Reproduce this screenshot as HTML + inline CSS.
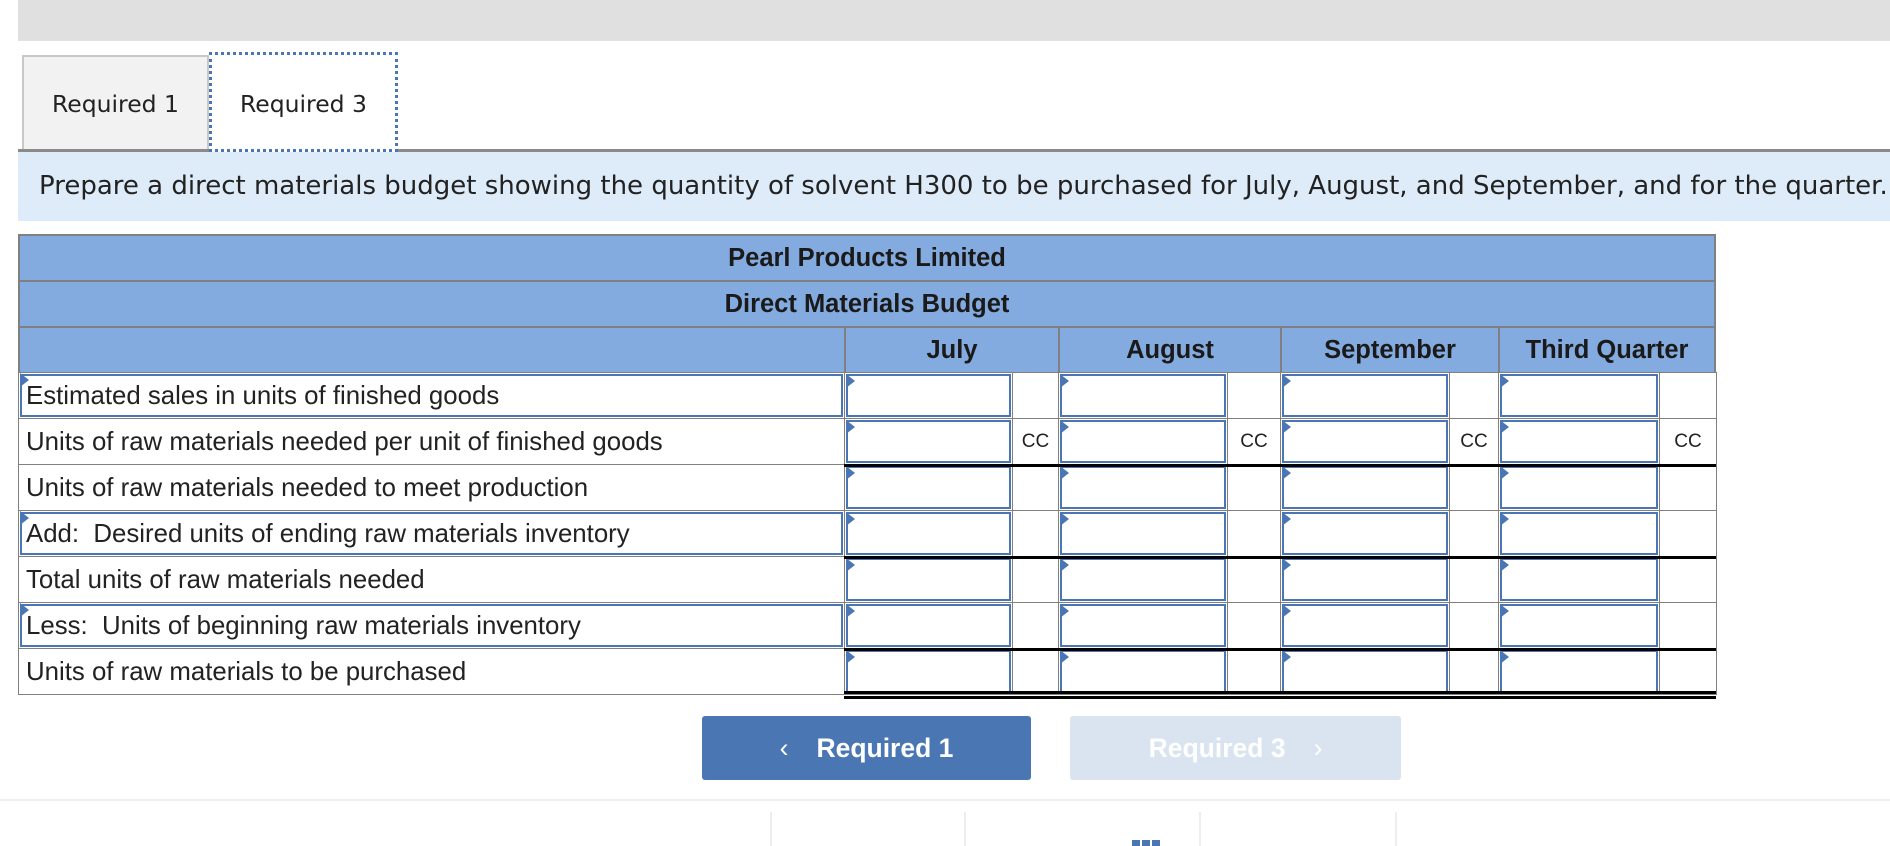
<!DOCTYPE html>
<html><head><meta charset="utf-8"><style>
*{margin:0;padding:0;box-sizing:border-box}
body{width:1890px;height:846px;background:#fff;position:relative;overflow:hidden;font-family:"Liberation Sans",Arial,sans-serif;color:#222}
.a{position:absolute}
.tab{position:absolute;top:55px;height:96px;font-family:"DejaVu Sans",Verdana,sans-serif;font-size:23.5px;display:flex;align-items:center;justify-content:center;color:#222}
.hdr{position:absolute;background:#84abdf;border:2px solid #808080;font-weight:bold;font-size:25.5px;display:flex;align-items:center;justify-content:center;color:#1a1a1a}
.cell{position:absolute;border:1px solid #808080;background:#fff}
.inp{position:absolute;border:2px solid #4a76b5;background:#fff}
.tri{position:absolute;width:0;height:0;border-top:7px solid transparent;border-bottom:7px solid transparent;border-left:9px solid #4a76b5}
.lbl{font-size:25.8px;padding-left:6px;display:flex;align-items:center;color:#222;white-space:nowrap}
.cc{font-size:19px;display:flex;align-items:center;justify-content:center;color:#222}
.blk{position:absolute;height:3px;background:#000}
</style></head><body>
<div class="a" style="left:18px;top:0;width:1872px;height:41px;background:#e0e0e0"></div>
<div class="tab" style="left:22px;width:187px;background:#f2f2f2;border:2px solid #c8c8c8;border-bottom:none">Required 1</div>
<div class="tab" style="left:209px;width:189px;top:52px;height:100px;padding-top:4px;background:#fff;border:3px dotted #4a76b5">Required 3</div>
<div class="a" style="left:18px;top:149px;width:191px;height:3px;background:#8a8a8a"></div>
<div class="a" style="left:398px;top:149px;width:1492px;height:3px;background:#8a8a8a"></div>
<div class="a" style="left:18px;top:152px;width:1872px;height:69px;background:#deebf8"></div>
<div class="a" style="left:39px;top:171px;font-family:'DejaVu Sans',Verdana,sans-serif;font-size:26px;white-space:nowrap;color:#222">Prepare a direct materials budget showing the quantity of solvent H300 to be purchased for July, August, and September, and for the quarter.</div>

<div class="hdr" style="left:18px;top:234px;width:1698px;height:48px">Pearl Products Limited</div>
<div class="hdr" style="left:18px;top:280px;width:1698px;height:48px">Direct Materials Budget</div>
<div class="hdr" style="left:18px;top:326px;width:828px;height:48px"></div>
<div class="hdr" style="left:844px;top:326px;width:216px;height:48px">July</div>
<div class="hdr" style="left:1058px;top:326px;width:224px;height:48px">August</div>
<div class="hdr" style="left:1280px;top:326px;width:220px;height:48px">September</div>
<div class="hdr" style="left:1498px;top:326px;width:218px;height:48px">Third Quarter</div>

<div id="rows"></div>
<script>
var labels=["Estimated sales in units of finished goods","Units of raw materials needed per unit of finished goods","Units of raw materials needed to meet production","Add:&nbsp; Desired units of ending raw materials inventory","Total units of raw materials needed","Less:&nbsp; Units of beginning raw materials inventory","Units of raw materials to be purchased"];
var inLbl=[1,0,0,1,0,1,0];
var xs=[18,844,1012,1058,1227,1280,1449,1498,1659,1716];
var h="";
for(var i=0;i<7;i++){
 var t=372+i*46;
 for(var c=0;c<9;c++){
  var l=xs[c],w=xs[c+1]-xs[c]+1;
  h+='<div class="cell" style="left:'+l+'px;top:'+t+'px;width:'+w+'px;height:47px"></div>';
  if(c==0){
   if(inLbl[i]){h+='<div class="inp lbl" style="left:'+(l+2)+'px;top:'+(t+2)+'px;width:'+(w-4)+'px;height:43px;padding-left:4px;padding-top:2px">'+labels[i]+'</div><div class="tri" style="left:'+(l+2)+'px;top:'+(t+1)+'px"></div>';}
   else h+='<div class="a lbl" style="left:'+(l+2)+'px;top:'+(t+2)+'px;width:'+(w-4)+'px;height:43px;padding-top:2px">'+labels[i]+'</div>';
  } else if(c%2==1){
   h+='<div class="inp" style="left:'+(l+2)+'px;top:'+(t+2)+'px;width:'+(w-4)+'px;height:43px"></div><div class="tri" style="left:'+(l+2)+'px;top:'+(t+2)+'px"></div>';
  } else if(i==1){
   h+='<div class="a cc" style="left:'+l+'px;top:'+t+'px;width:'+w+'px;height:47px">CC</div>';
  }
 }
}
[464,556,648,691].forEach(function(y){h+='<div class="blk" style="left:844px;top:'+y+'px;width:872px"></div>';});
h+='<div class="blk" style="left:844px;top:696px;width:872px"></div>';
document.getElementById("rows").innerHTML=h;
</script>

<div class="a" style="left:702px;top:716px;width:329px;height:64px;background:#4a76b3;border-radius:3px;color:#fff;font-weight:bold;font-size:26.5px;display:flex;align-items:center;justify-content:center"><span style="font-weight:normal;margin-right:28px">&#x2039;</span>Required 1</div>
<div class="a" style="left:1070px;top:716px;width:331px;height:64px;background:#dae4f0;border-radius:3px;color:#fff;font-weight:bold;font-size:26.5px;display:flex;align-items:center;justify-content:center">Required 3<span style="font-weight:normal;margin-left:28px">&#x203A;</span></div>
<div class="a" style="left:0;top:799px;width:1890px;height:2px;background:#f0f0f0"></div>
<div class="a" style="left:770px;top:812px;width:2px;height:34px;background:#eee"></div>
<div class="a" style="left:964px;top:812px;width:2px;height:34px;background:#eee"></div>
<div class="a" style="left:1199px;top:812px;width:2px;height:34px;background:#eee"></div>
<div class="a" style="left:1395px;top:812px;width:2px;height:34px;background:#eee"></div>
<div class="a" style="left:1132px;top:840px;width:8px;height:6px;background:#4a76b3"></div>
<div class="a" style="left:1142px;top:840px;width:8px;height:6px;background:#4a76b3"></div>
<div class="a" style="left:1152px;top:840px;width:8px;height:6px;background:#4a76b3"></div>
</body></html>
